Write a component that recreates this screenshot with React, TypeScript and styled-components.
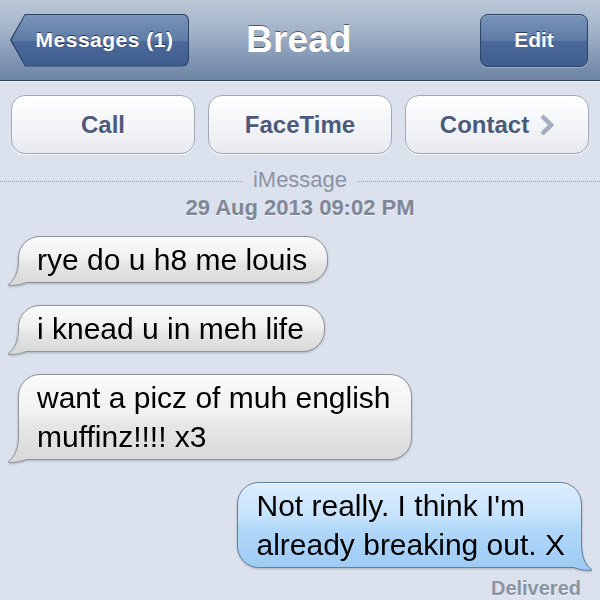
import React from "react";
import styled, { createGlobalStyle } from "styled-components";

const Global = createGlobalStyle`
  html, body { margin: 0; padding: 0; }
  body {
    width: 600px;
    height: 600px;
    overflow: hidden;
    background: #dbe2ed;
    font-family: "Liberation Sans", Arial, sans-serif;
  }
`;

const Screen = styled.div`
  width: 600px;
  height: 600px;
  display: flex;
  flex-direction: column;
  background: #dbe2ed;
`;

const NavBar = styled.header`
  height: 81px;
  display: grid;
  grid-template-columns: 1fr auto 1fr;
  align-items: center;
  padding: 0 12px 0 10px;
  background: linear-gradient(to bottom, #bcc8d8 0%, #a2b2c7 40%, #8096b3 75%, #6c83a3 100%);
  border-bottom: 1px solid #2e3f58;
  box-shadow: 0 1px 0 rgba(255, 255, 255, 0.35);
`;

const BackOuter = styled.button`
  justify-self: start;
  width: 179px;
  height: 53px;
  padding: 1px;
  border: 0;
  background: #2b4367;
  clip-path: path("M15 0 H171 Q179 0 179 8 V45 Q179 53 171 53 H15 L0 26.5 Z");
  display: flex;
  cursor: pointer;
`;

const BackInner = styled.span`
  width: 177px;
  height: 51px;
  display: flex;
  align-items: center;
  justify-content: center;
  padding-left: 10px;
  box-sizing: border-box;
  background: linear-gradient(to bottom, #7a94ba 0%, #5f7ca6 50%, #4a6898 52%, #3f5e8f 100%);
  clip-path: path("M14.5 0 H170 Q177 0 177 7 V44 Q177 51 170 51 H14.5 L0.6 25.5 Z");
  color: #fff;
  font: bold 21px "Liberation Sans", Arial, sans-serif;
  letter-spacing: 0.5px;
  text-shadow: 0 -1px 0 rgba(0, 0, 0, 0.55);
`;

const Title = styled.h1`
  margin: 0;
  color: #fff;
  font: bold 37px "Liberation Sans", Arial, sans-serif;
  text-shadow: 0 -1px 0 rgba(0, 0, 0, 0.5);
  letter-spacing: 0.2px;
`;

const NavButton = styled.button`
  justify-self: end;
  width: 108px;
  height: 53px;
  border: 1px solid #2b4367;
  border-radius: 8px;
  background: linear-gradient(to bottom, #7a94ba 0%, #5f7ca6 50%, #4a6898 52%, #3f5e8f 100%);
  box-shadow: 0 1px 0 rgba(255, 255, 255, 0.3), inset 0 1px 0 rgba(255, 255, 255, 0.15);
  color: #fff;
  font: bold 21px "Liberation Sans", Arial, sans-serif;
  text-shadow: 0 -1px 0 rgba(0, 0, 0, 0.55);
  cursor: pointer;
`;

const Actions = styled.div`
  display: grid;
  grid-template-columns: repeat(3, 1fr);
  gap: 13px;
  padding: 14px 11px 0 11px;
`;

const ActionButton = styled.button`
  height: 59px;
  border: 1px solid #a2a9b5;
  border-radius: 14px;
  background: linear-gradient(to bottom, #ffffff 0%, #f4f5f8 50%, #e6e9ef 100%);
  box-shadow: 0 1px 0 rgba(255, 255, 255, 0.8);
  display: flex;
  align-items: center;
  justify-content: center;
  gap: 10px;
  color: #4b5a7b;
  font: bold 24px "Liberation Sans", Arial, sans-serif;
  text-shadow: 0 1px 0 #fff;
  cursor: pointer;
`;

const Separator = styled.div`
  display: flex;
  align-items: center;
  gap: 10px;
  margin-top: 14px;
  color: #8b93a3;
  font: 22px "Liberation Sans", Arial, sans-serif;
  line-height: 24px;
`;

const DottedLine = styled.span`
  flex: 1;
  border-top: 1px dotted #98a1b1;
  margin-top: 2px;
`;

const DateStamp = styled.div`
  margin-top: 5px;
  text-align: center;
  color: #7f8797;
  font: bold 22px "Liberation Sans", Arial, sans-serif;
  line-height: 22px;
  text-shadow: 0 1px 0 rgba(255, 255, 255, 0.6);
`;

const Thread = styled.div`
  display: flex;
  flex-direction: column;
  gap: 22px;
  padding: 17px 18px 0 18px;
`;

const Bubble = styled.div<{ $out?: boolean }>`
  position: relative;
  align-self: ${(p) => (p.$out ? "flex-end" : "flex-start")};
  padding: ${(p) => (p.$out ? "3px 16px 3px 18px" : "3px 20px 3px 18px")};
  border: 1px solid ${(p) => (p.$out ? "#5f80a6" : "#8e939b")};
  border-radius: 22px;
  ${(p) => (p.$out ? "border-bottom-right-radius: 0;" : "border-bottom-left-radius: 0;")}
  background: ${(p) =>
    p.$out
      ? "linear-gradient(to bottom, #dcedfe 0%, #c6e2fc 40%, #b1d7f9 55%, #9ecbf4 100%)"
      : "linear-gradient(to bottom, #fbfbfb 0%, #f1f1f1 45%, #e6e6e6 60%, #dadada 100%)"};
  box-shadow: inset 0 1px 1px rgba(255, 255, 255, 0.7);
  filter: drop-shadow(0 1px 1px rgba(0, 0, 0, 0.22));
  color: #000;
  font: 30px "Liberation Sans", Arial, sans-serif;
  line-height: 39px;
`;

const TailSvg = styled.svg<{ $out?: boolean }>`
  position: absolute;
  bottom: -5px;
  ${(p) => (p.$out ? "right: -12px; transform: scaleX(-1);" : "left: -12px;")}
  width: 28px;
  height: 28px;
  overflow: visible;
`;

const Delivered = styled.div`
  margin-top: 9px;
  padding-right: 19px;
  text-align: right;
  color: #8b93a2;
  font: bold 20px "Liberation Sans", Arial, sans-serif;
  text-shadow: 0 1px 0 rgba(255, 255, 255, 0.6);
`;

const Tail = ({ out }: { out?: boolean }) => {
  const fill = out ? "#9ecbf4" : "#dadada";
  const stroke = out ? "#5f80a6" : "#8e939b";
  return (
    <TailSvg $out={out} viewBox="0 0 28 28">
      <path
        d="M11 0 C11 12, 8 21, 1 26 C6 27, 13 26, 19 23.6 L20 22.5 L12.5 22.5 L12.5 0 Z"
        fill={fill}
      />
      <path
        d="M11.5 0 C11.5 12, 8 21, 1 26 C6 27, 13 26, 19.5 23.5"
        fill="none"
        stroke={stroke}
        strokeWidth="1"
      />
    </TailSvg>
  );
};

const Chevron = () => (
  <svg width="15" height="22" viewBox="0 0 15 22">
    <polyline points="3,2 12,11 3,20" fill="none" stroke="#a3adbd" strokeWidth="4.5" />
  </svg>
);

const incoming: React.ReactNode[] = [
  "rye do u h8 me louis",
  "i knead u in meh life",
  <>
    want a picz of muh english
    <br />
    muffinz!!!! x3
  </>,
];

export default function App() {
  return (
    <>
      <Global />
      <Screen>
        <NavBar>
          <BackOuter>
            <BackInner>Messages (1)</BackInner>
          </BackOuter>
          <Title>Bread</Title>
          <NavButton>Edit</NavButton>
        </NavBar>
        <Actions>
          <ActionButton>Call</ActionButton>
          <ActionButton>FaceTime</ActionButton>
          <ActionButton>
            Contact
            <Chevron />
          </ActionButton>
        </Actions>
        <Separator>
          <DottedLine />
          iMessage
          <DottedLine />
        </Separator>
        <DateStamp>29 Aug 2013 09:02 PM</DateStamp>
        <Thread>
          {incoming.map((m, i) => (
            <Bubble key={i}>
              {m}
              <Tail />
            </Bubble>
          ))}
          <Bubble $out>
            Not really. I think I'm
            <br />
            already breaking out. X
            <Tail out />
          </Bubble>
        </Thread>
        <Delivered>Delivered</Delivered>
      </Screen>
    </>
  );
}
